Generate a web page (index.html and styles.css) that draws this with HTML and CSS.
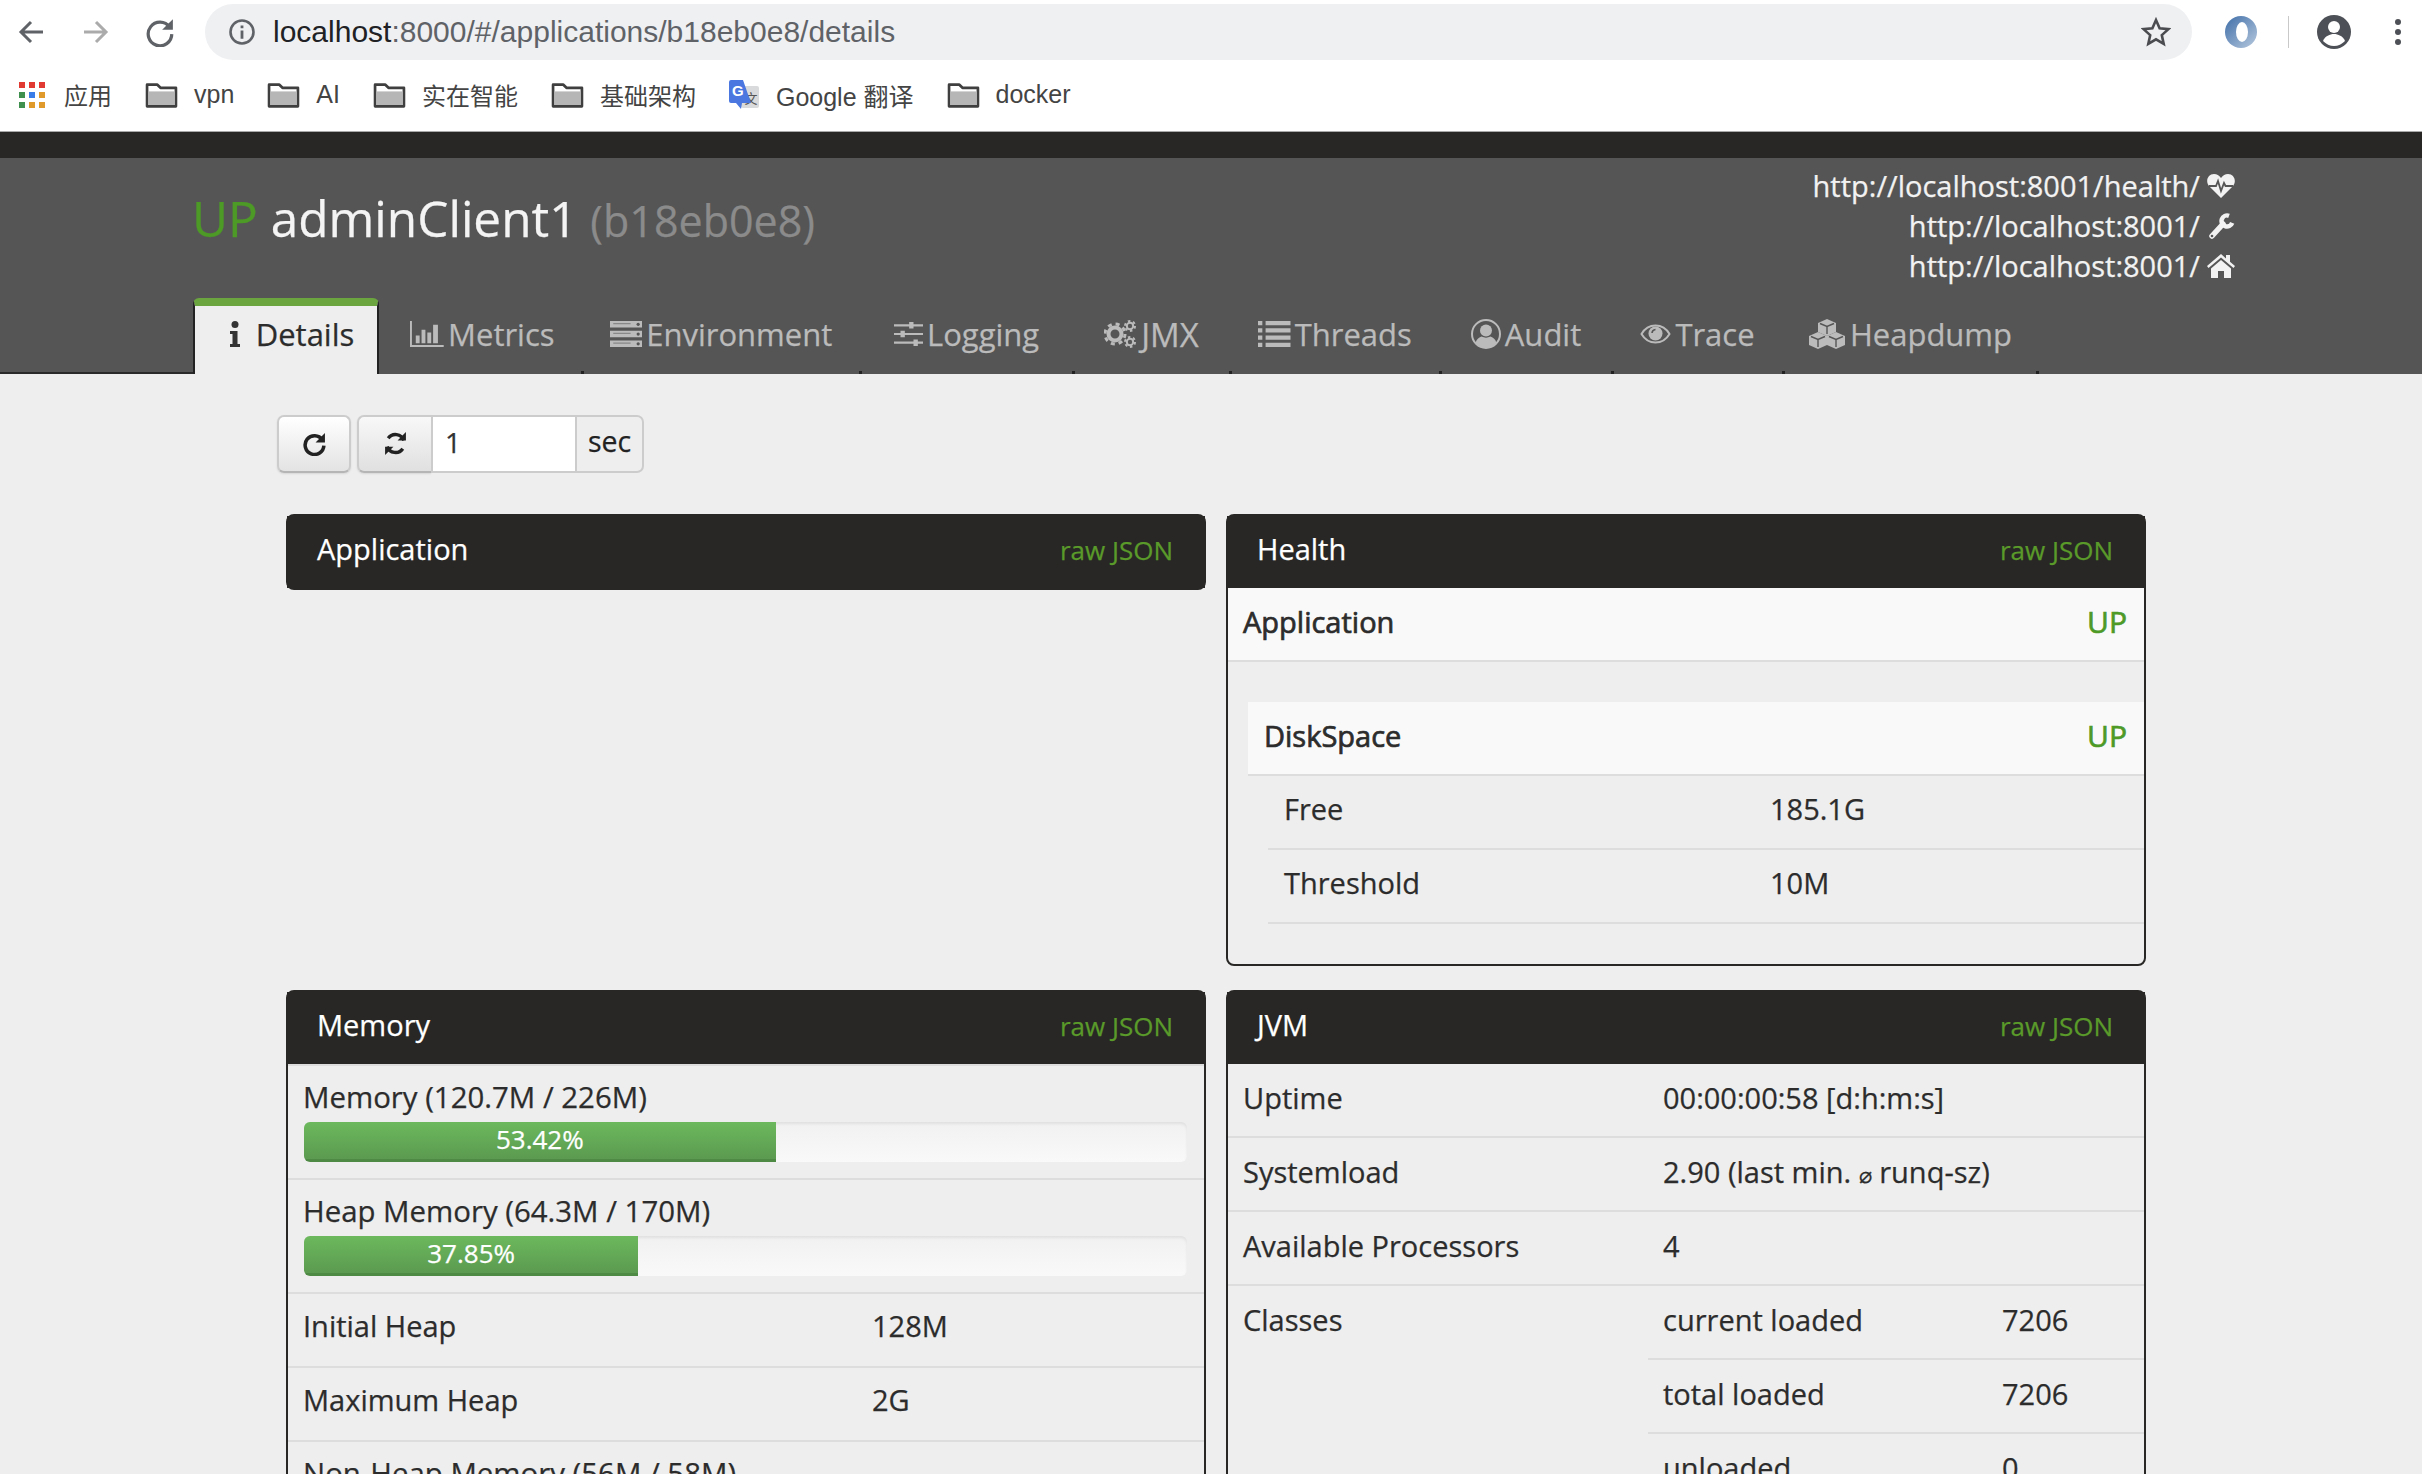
FILE: index.html
```html
<!DOCTYPE html>
<html lang="en">
<head>
<meta charset="utf-8">
<title>adminClient1</title>
<link rel="stylesheet" href="styles.css">
</head>
<body>
<div class="browser">
  <div class="nav">
    <svg class="nav-ic" viewBox="0 0 28 28"><path d="M26 14H4M14 4 4 14l10 10" fill="none" stroke="#5f6368" stroke-width="3"/></svg>
    <svg class="nav-ic" viewBox="0 0 28 28"><path d="M2 14h22M14 4l10 10-10 10" fill="none" stroke="#ababab" stroke-width="3"/></svg>
    <svg class="nav-ic" viewBox="0 0 28 28"><path d="M23 9.5A11 11 0 1 0 25 16" fill="none" stroke="#5f6368" stroke-width="3"/><path d="M26 2v10H16z" fill="#5f6368"/></svg>
    <div class="omni">
      <svg class="info" viewBox="0 0 28 28"><circle cx="14" cy="14" r="11.5" fill="none" stroke="#5f6368" stroke-width="2.6"/><path d="M12.6 12.4h2.8v8.4h-2.8zM12.6 7.4h2.8v2.8h-2.8z" fill="#5f6368"/></svg>
      <span class="url"><span class="host">localhost</span>:8000/#/applications/b18eb0e8/details</span>
      <svg class="star" viewBox="0 0 30 30"><path d="m15 3 3.6 8.2 8.9.9-6.7 6 1.9 8.8L15 22.3 7.3 26.900l1.900-8.800-6.700-6 8.900-.9z" fill="none" stroke="#4a4c50" stroke-width="2.600"/></svg>
    </div>
    <svg class="ext" viewBox="0 0 34 34"><defs><linearGradient id="ring" x1="0" y1="0" x2="1" y2="1"><stop offset="0" stop-color="#3f6ea8"/><stop offset="1" stop-color="#b7c9de"/></linearGradient></defs><circle cx="17" cy="17" r="16" fill="url(#ring)"/><ellipse cx="18" cy="17" rx="6" ry="10" fill="#fff"/></svg>
    <span class="sep"></span>
    <svg class="acct" viewBox="0 0 36 36"><circle cx="18" cy="18" r="17" fill="#4d5056"/><circle cx="18" cy="13" r="6" fill="#fff"/><path d="M7 27c2-5 7-7 11-7s9 2 11 7c-3 3-7 5-11 5s-8-2-11-5z" fill="#fff"/></svg>
    <svg class="dots" viewBox="0 0 8 28"><circle cx="4" cy="4" r="3" fill="#4d5056"/><circle cx="4" cy="14" r="3" fill="#4d5056"/><circle cx="4" cy="24" r="3" fill="#4d5056"/></svg>
  </div>
  <div class="marks">
    <span class="mark mark-apps"><svg class="apps" viewBox="0 0 26 26"><rect width="6" height="6" fill="#e03a33"/><rect x="10" width="6" height="6" fill="#e03a33"/><rect x="20" width="6" height="6" fill="#e03a33"/><rect y="10" width="6" height="6" fill="#3f8f4f"/><rect x="10" y="10" width="6" height="6" fill="#3b7de8"/><rect x="20" y="10" width="6" height="6" fill="#e09a2b"/><rect y="20" width="6" height="6" fill="#3f8f4f"/><rect x="10" y="20" width="6" height="6" fill="#e09a2b"/><rect x="20" y="20" width="6" height="6" fill="#e09a2b"/></svg><span class="zh">应用</span></span>
    <span class="mark"><svg class="folder" viewBox="0 0 32 26"><path d="M2 3.500h10l3 3h15v18H2z" fill="#fff" stroke="#3f3f3f" stroke-width="2.600" stroke-linejoin="round"/><path d="M3.300 10h25.400v13.200H3.300z" fill="#b6b6b6"/></svg>vpn</span>
    <span class="mark"><svg class="folder" viewBox="0 0 32 26"><path d="M2 3.500h10l3 3h15v18H2z" fill="#fff" stroke="#3f3f3f" stroke-width="2.600" stroke-linejoin="round"/><path d="M3.300 10h25.400v13.200H3.300z" fill="#b6b6b6"/></svg>AI</span>
    <span class="mark"><svg class="folder" viewBox="0 0 32 26"><path d="M2 3.500h10l3 3h15v18H2z" fill="#fff" stroke="#3f3f3f" stroke-width="2.600" stroke-linejoin="round"/><path d="M3.300 10h25.400v13.200H3.300z" fill="#b6b6b6"/></svg><span class="zh">实在智能</span></span>
    <span class="mark"><svg class="folder" viewBox="0 0 32 26"><path d="M2 3.500h10l3 3h15v18H2z" fill="#fff" stroke="#3f3f3f" stroke-width="2.600" stroke-linejoin="round"/><path d="M3.300 10h25.400v13.200H3.300z" fill="#b6b6b6"/></svg><span class="zh">基础架构</span></span>
    <span class="mark"><svg class="gt" viewBox="0 0 30 30"><rect x="12" y="6" width="18" height="22" rx="2" fill="#d9dadb"/><text x="15.500" y="23" class="gt-zh">文</text><path d="M0 2a2 2 0 0 1 2-2h12l8 23H13l-1 6-5-6H2a2 2 0 0 1-2-2z" fill="#4a78e0"/><text x="3" y="16" class="gt-g">G</text></svg>Google 翻译</span>
    <span class="mark"><svg class="folder" viewBox="0 0 32 26"><path d="M2 3.500h10l3 3h15v18H2z" fill="#fff" stroke="#3f3f3f" stroke-width="2.600" stroke-linejoin="round"/><path d="M3.300 10h25.400v13.200H3.300z" fill="#b6b6b6"/></svg>docker</span>
  </div>
</div>

<div class="strip"></div>

<header class="head">
  <div class="head-top">
    <h1 class="title"><span class="up">UP</span> adminClient1 <small class="id">(b18eb0e8)</small></h1>
    <div class="links">
      <div class="link">http://localhost:8001/health/<svg class="lic" viewBox="0 0 30 26"><path d="M15 25 3 13C-1 8 2 1 8 1c3 0 5 1.500 7 4 2-2.500 4-4 7-4 6 0 9 7 5 12z" fill="#f2f2f2"/><path d="M3 13h7l2-5 3 10 3-8 1.500 3H27" fill="none" stroke="#555" stroke-width="1.800"/></svg></div>
      <div class="link">http://localhost:8001/<svg class="lic" viewBox="0 0 30 26"><path d="M6 23 17 11" fill="none" stroke="#f2f2f2" stroke-width="5.500" stroke-linecap="round"/><path d="M23 2.800A5.500 5.500 0 1 0 26.200 9.900" fill="none" stroke="#f2f2f2" stroke-width="4.500"/><circle cx="6" cy="23" r="1.300" fill="#555"/></svg></div>
      <div class="link">http://localhost:8001/<svg class="lic" viewBox="0 0 30 26"><path d="M15 1 1 13l1.500 2L15 4.500 27.500 15l1.500-2-5-4.200V2h-4v3.400z" fill="#f2f2f2"/><path d="M15 7 5 15.500V25h7v-7h6v7h7v-9.500z" fill="#f2f2f2"/></svg></div>
    </div>
  </div>
  <nav class="tabs">
    <a class="tab active"><svg class="ti" viewBox="0 0 10 26"><circle cx="5" cy="3.500" r="3.500" fill="#333"/><path d="M0 10h7.500v13H10v3H0v-3h2.500V13H0z" fill="#333"/></svg><span class="tl">Details</span></a>
    <a class="tab"><svg class="ti" viewBox="0 0 35 27"><path d="M1 0v26h34" fill="none" stroke="#bbb" stroke-width="2"/><path d="M6 15h4v8H6zM12 9h4v14h-4zM18 12h4v11h-4zM24 4h5v19h-5z" fill="#bbb"/></svg><span class="tl">Metrics</span></a>
    <a class="tab"><svg class="ti" viewBox="0 0 30 24"><path d="M0 0h30v6H0zM0 9h30v6H0zM0 18h30v6H0z" fill="#bbb"/><circle cx="26" cy="3" r="1.500" fill="#555"/><circle cx="26" cy="12" r="1.500" fill="#555"/><circle cx="26" cy="21" r="1.500" fill="#555"/><path d="M3 2.500h16M3 11.500h16M3 20.500h16" stroke="#888" stroke-width="1.200"/></svg><span class="tl">Environment</span></a>
    <a class="tab"><svg class="ti" viewBox="0 0 27 24"><path d="M0 4h27M0 12h27M0 20h27" stroke="#bbb" stroke-width="2"/><path d="M14 1h4v6h-4zM6 9h4v6H6zM18 17h4v6h-4z" fill="#bbb"/></svg><span class="tl">Logging</span></a>
    <a class="tab"><svg class="ti ti-jmx" viewBox="0 0 33 28"><circle cx="11" cy="14" r="6.500" fill="none" stroke="#bbb" stroke-width="4"/><circle cx="11" cy="14" r="10" fill="none" stroke="#bbb" stroke-width="3" stroke-dasharray="4 3.900"/><circle cx="26" cy="6" r="3.200" fill="none" stroke="#bbb" stroke-width="2"/><circle cx="26" cy="6" r="5" fill="none" stroke="#bbb" stroke-width="2" stroke-dasharray="2.500 2.700"/><circle cx="26" cy="22" r="3.200" fill="none" stroke="#bbb" stroke-width="2"/><circle cx="26" cy="22" r="5" fill="none" stroke="#bbb" stroke-width="2" stroke-dasharray="2.500 2.700"/></svg><span class="tl tl-jmx">JMX</span></a>
    <a class="tab"><svg class="ti" viewBox="0 0 30 24"><path d="M0 0h4v4H0zM7 0h23v4H7zM0 6.700h4v4H0zM7 6.700h23v4H7zM0 13.400h4v4H0zM7 13.400h23v4H7zM0 20h4v4H0zM7 20h23v4H7z" fill="#bbb"/></svg><span class="tl">Threads</span></a>
    <a class="tab"><svg class="ti ti-audit" viewBox="0 0 30 30"><circle cx="15" cy="15" r="14" fill="none" stroke="#bbb" stroke-width="2"/><circle cx="15" cy="11.500" r="6" fill="#bbb"/><path d="M4.500 24c1-4 4-6 6-6.500 3 1.500 6 1.500 9 0 2 .5 5 2.500 6 6.500a14 14 0 0 1-21 0z" fill="#bbb"/></svg><span class="tl">Audit</span></a>
    <a class="tab"><svg class="ti ti-eye" viewBox="0 0 31 20"><path d="M1.500 10C5 4 10 1.500 15.500 1.500S26 4 29.500 10C26 16 21 18.500 15.500 18.500S5 16 1.500 10z" fill="none" stroke="#bbb" stroke-width="2"/><circle cx="15.500" cy="9.500" r="7" fill="#bbb"/><path d="M12 9a4 4 0 0 1 3.500-3.500" stroke="#555" stroke-width="1.600" fill="none"/></svg><span class="tl">Trace</span></a>
    <a class="tab"><svg class="ti ti-cube" viewBox="0 0 38 30"><path d="m19 0 9 4v9l-9 4-9-4V4z" fill="#bbb"/><path d="m10 13 9 4v9l-9 4-9-4v-9z" fill="#bbb"/><path d="m28 13 9 4v9l-9 4-9-4v-9z" fill="#bbb"/><path d="m12 4.500 7 3 7-3M19 7.500V15M3 17.500l7 3 7-3M10 20.500V28M21 17.500l7 3 7-3M28 20.500V28" fill="none" stroke="#555" stroke-width="1.400"/></svg><span class="tl">Heapdump</span></a>
  </nav>
</header>

<main class="main">
  <div class="tools">
    <button class="btn"><svg class="bi" viewBox="0 0 24 24"><path d="M19.500 8.500A9 9 0 1 0 21 14" fill="none" stroke="#222" stroke-width="3.400"/><path d="M22 2v9h-9z" fill="#222"/></svg></button>
    <div class="igroup">
      <button class="btn btn-join"><svg class="bi" viewBox="0 0 24 24"><path d="M20 9A8.500 8.500 0 0 0 5 7M4 15a8.500 8.500 0 0 0 15 2" fill="none" stroke="#222" stroke-width="3.200"/><path d="M22 1v8h-8zM2 23v-8h8z" fill="#222"/></svg></button>
      <span class="field">1</span>
      <span class="addon">sec</span>
    </div>
  </div>

  <div class="grid">
    <section class="panel panel-app">
      <div class="ph"><span class="pt">Application</span><a class="raw">raw JSON</a></div>
    </section>

    <section class="panel">
      <div class="ph"><span class="pt">Health</span><a class="raw">raw JSON</a></div>
      <div class="status"><span>Application</span><span class="ok">UP</span></div>
      <div class="disk">
        <div class="status status-disk"><span>DiskSpace</span><span class="ok">UP</span></div>
        <div class="row row-disk"><span class="k k-disk">Free</span><span>185.1G</span></div>
        <div class="row row-disk"><span class="k k-disk">Threshold</span><span>10M</span></div>
      </div>
    </section>

    <section class="panel">
      <div class="ph"><span class="pt">Memory</span><a class="raw">raw JSON</a></div>
      <div class="mem-rows">
        <div class="mem">
          <div class="mem-l">Memory (120.7M / 226M)</div>
          <div class="prog"><div class="fill" style="width:53.42%">53.42%</div></div>
        </div>
        <div class="mem">
          <div class="mem-l">Heap Memory (64.3M / 170M)</div>
          <div class="prog"><div class="fill" style="width:37.85%">37.85%</div></div>
        </div>
        <div class="row"><span class="k k-mem">Initial Heap</span><span>128M</span></div>
        <div class="row"><span class="k k-mem">Maximum Heap</span><span>2G</span></div>
        <div class="mem">
          <div class="mem-l">Non-Heap Memory (56M / 58M)</div>
        </div>
      </div>
    </section>

    <section class="panel">
      <div class="ph"><span class="pt">JVM</span><a class="raw">raw JSON</a></div>
      <div class="row"><span class="k k-jvm">Uptime</span><span>00:00:00:58 [d:h:m:s]</span></div>
      <div class="row"><span class="k k-jvm">Systemload</span><span>2.90 (last min. <span class="avg">⌀</span> runq-sz)</span></div>
      <div class="row"><span class="k k-jvm">Available Processors</span><span>4</span></div>
      <div class="classes">
        <span class="classes-k">Classes</span>
        <div class="nested">
          <div class="row row-nest"><span class="k k-nest">current loaded</span><span>7206</span></div>
          <div class="row row-nest"><span class="k k-nest">total loaded</span><span>7206</span></div>
          <div class="row row-nest"><span class="k k-nest">unloaded</span><span>0</span></div>
        </div>
      </div>
    </section>
  </div>
</main>
</body>
</html>
```

FILE: styles.css
```css
* { box-sizing: border-box; }
html, body { margin: 0; height: 1474px; overflow: hidden; }
body {
  background: #eee;
  color: #2c2c2c;
  font-family: "Open Sans", "Noto Sans CJK SC", sans-serif;
  font-size: 29px;
}
.head, .main { -webkit-text-stroke: 0.25px currentColor; }

/* browser chrome */
.browser { height: 132px; background: #fff; border-bottom: 1px solid #a9a9a9; font-family: "Liberation Sans", "Noto Sans CJK SC", sans-serif; }
.nav { height: 64px; display: flex; align-items: center; padding-left: 17px; }
.nav-ic { width: 28px; height: 28px; margin-right: 36px; flex: none; }
.nav-ic:nth-child(2) { margin-left: 1px; }
.nav-ic:nth-child(3) { margin-left: -1px; margin-right: 30px; width: 30px; height: 30px; }
.omni { width: 1987px; height: 56px; border-radius: 28px; background: #eff0f2; display: flex; align-items: center; padding-left: 23px; padding-right: 21px; flex: none; }
.info { width: 28px; height: 28px; margin-right: 17px; flex: none; }
.url { font-size: 30px; color: #5f6368; flex: 1; white-space: nowrap; }
.host { color: #202124; }
.star { width: 30px; height: 30px; flex: none; }
.ext { width: 34px; height: 34px; margin-left: 32px; flex: none; }
.sep { width: 1px; height: 32px; background: #c9c9c9; margin-left: 30px; flex: none; }
.acct { width: 36px; height: 36px; margin-left: 27px; flex: none; }
.dots { width: 8px; height: 28px; margin-left: 42px; flex: none; }

.marks { height: 61px; display: flex; align-items: center; padding-left: 19px; font-size: 25px; color: #444; }
.mark { display: flex; align-items: center; margin-right: 33px; white-space: nowrap; }
.zh { font-size: 24px; }
.apps { width: 26px; height: 26px; margin-right: 19px; }
.folder { width: 33px; height: 27px; margin-right: 16px; }
.gt { width: 30px; height: 30px; margin-right: 17px; }
.gt-zh { font-size: 13px; fill: #555; }
.gt-g { font-size: 15px; font-weight: 700; fill: #fff; font-family: "Liberation Sans", sans-serif; }

/* header */
.strip { height: 26px; background: #282725; }
.head { height: 216px; background: #555; display: flex; flex-direction: column; }
.head-top { display: flex; justify-content: space-between; padding: 0 186px 0 192px; }
.title { margin: 30px 0 0; font-size: 49.500px; line-height: 60px; font-weight: 400; color: #f4f4f4; white-space: nowrap; }
.up { color: #4d9a27; }
.id { font-size: 43px; color: #8b8b8b; }
.links { padding-top: 8px; text-align: right; color: #f2f2f2; font-size: 29px; line-height: 40px; }
.link { display: flex; justify-content: flex-end; align-items: center; white-space: nowrap; }
.lic { width: 30px; height: 26px; margin-left: 6px; flex: none; }

.tabs {
  margin-top: auto;
  height: 76px;
  margin-left: 193px;
  display: grid;
  grid-template-columns: 190px 199px 278px 213px 157px 210px 172px 171px 254px;
  position: relative;
}
.tabs::before { content: ""; position: absolute; left: -193px; width: 193px; bottom: 0; height: 2px; background: #2a2a2a; }
.tab { position: relative; display: flex; align-items: center; justify-content: center; gap: 4px; color: #bbb; font-size: 31px; padding-bottom: 4px; }
.tab::after { content: ""; position: absolute; right: -2px; bottom: 0; width: 3px; height: 3px; background: #222; }
.tab.active { background: #eee; color: #2c2c2c; border-top: 8px solid #6ba53f; border-left: 2px solid #222; border-right: 2px solid #222; border-radius: 6px 6px 0 0; gap: 16px; margin-right: 4px; padding-left: 12px; }
.tab.active::after { display: none; }
.tab.active .tl, .tab.active .ti { margin-top: -8px; }
.ti { height: 26px; width: auto; flex: none; }
.ti-jmx { height: 28px; }
.ti-audit { height: 30px; }
.ti-eye { height: 20px; }
.ti-cube { height: 30px; }
.tl { white-space: nowrap; }
.tl-jmx { font-size: 33px; }

/* main */
.main { padding-top: 41px; }
.tools { display: flex; gap: 6px; margin-left: 277px; height: 58px; }
.btn { width: 74px; height: 58px; padding: 0; border: 2px solid #ccc; border-bottom-color: #b5b5b5; border-radius: 7px; background: linear-gradient(#fff, #e3e3e3); display: flex; align-items: center; justify-content: center; box-shadow: 0 1px 2px rgba(0,0,0,.1); }
.bi { width: 25px; height: 25px; margin-top: -2px; }
.igroup { display: flex; height: 58px; }
.btn-join { border-radius: 7px 0 0 7px; border-right: 0; background: linear-gradient(#f8f8f8, #e0e0e0); }
.field { width: 146px; height: 58px; background: #fff; border: 2px solid #ccc; padding-left: 12px; font-size: 28px; line-height: 50px; color: #333; }
.addon { width: 67px; height: 58px; border: 2px solid #ccc; border-left: 0; border-radius: 0 7px 7px 0; background: #eee; text-align: center; font-size: 28.500px; line-height: 48px; color: #222; }

.grid { display: grid; grid-template-columns: 920px 920px; column-gap: 20px; row-gap: 24px; margin: 41px 0 0 286px; width: 1860px; align-items: start; }
.panel { border: 2px solid #282725; border-radius: 8px; }
.ph { height: 72px; background: #282725; display: flex; justify-content: space-between; align-items: center; padding: 0 32px 8px 30px; margin: 0 -1px; color: #fff; }
.pt { font-size: 29px; }
.raw { font-size: 26px; color: #5a9a2a; padding-top: 4px; }

.status { height: 74px; background: #f9f9f9; border-bottom: 2px solid #ddd; display: flex; align-items: center; justify-content: space-between; padding: 0 17px 6px 15px; font-size: 29px; -webkit-text-stroke: 0.7px currentColor; }
.ok { color: #4d9a27; font-size: 30px; }
.disk { padding: 40px 0 40px 20px; }
.status-disk { padding-left: 16px; }
.row { height: 74px; border-bottom: 2px solid #ddd; display: flex; align-items: center; padding: 0 0 6px 15px; white-space: nowrap; }
.row-disk { margin-left: 20px; padding: 0 0 8px 16px; }
.k { flex: none; }
.k-disk { width: 486px; }
.k-mem { width: 569px; }
.k-jvm { width: 420px; }
.k-nest { width: 339px; }

.mem-rows { border-top: 2px solid #ddd; }
.mem-rows .row { padding: 0 0 9px 15px; }
.mem { padding: 13px 17px 16px 16px; border-bottom: 2px solid #ddd; }
.mem-l { line-height: 36px; margin: 0 0 7px -1px; white-space: nowrap; font-size: 29.400px; }
.prog { height: 40px; border-radius: 6px; background: linear-gradient(#f1f1f1, #f9f9f9); box-shadow: inset 0 2px 3px rgba(0,0,0,.07); overflow: hidden; }
.fill { height: 40px; background: linear-gradient(#6cb95d, #5b9a50); border-bottom: 3px solid #4f8a45; color: #fff; text-align: center; font-size: 26px; line-height: 35px; }

.classes { display: flex; height: 222px; }
.classes-k { width: 420px; padding: 14px 0 0 15px; flex: none; }
.nested { flex: 1; }
.avg { font-size: 22px; }
```
